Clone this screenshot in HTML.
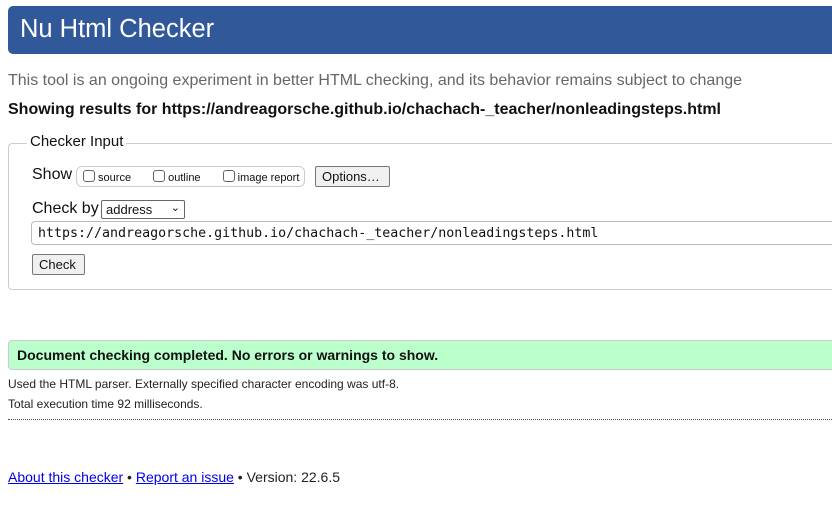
<!DOCTYPE html>
<html><head><meta charset="utf-8"><style>
*{box-sizing:border-box}
body{margin:0;width:832px;height:528px;background:#fff;font-family:"Liberation Sans",Arial,sans-serif;color:#111;position:relative;overflow:hidden}
.a{position:absolute;white-space:nowrap}
.hdr{left:8px;top:6px;width:830px;height:48px;background:#31599a;border-radius:5px 0 0 5px;color:#fff;font-size:25.5px;padding:9px 0 0 12px}
.fs{left:8px;top:143px;width:830px;height:147px;border:1px solid #ccc;border-right:none;border-radius:4px 0 0 4px}
.btn{border:1px solid #777;border-radius:2px;background:#f0f0f0;font-size:13px;padding:2px 6px}
.cb{display:inline-block;width:12px;height:12px;border:1px solid #666;border-radius:3px;vertical-align:-1px;background:#fff}
a{color:#00e;text-decoration:underline}
</style></head><body>
<div class="a hdr">Nu Html Checker</div>
<div class="a" style="left:8px;top:72px;font-size:16px;color:#666">This tool is an ongoing experiment in better HTML checking, and its behavior remains subject to change</div>
<div class="a" style="left:8px;top:101px;font-size:16px;font-weight:bold">Showing results for https://andreagorsche.github.io/chachach-_teacher/nonleadingsteps.html</div>
<div class="a fs"></div>
<div class="a" style="left:27px;top:133px;font-size:15px;background:#fff;padding:0 3px">Checker Input</div>
<div class="a" style="left:32px;top:166px;font-size:16px">Show</div>
<div class="a" style="left:76px;top:166px;width:229px;height:21px;border:1px solid #ccc;border-radius:6px;font-size:11px;padding:3px 0 0 6px"><span class="cb"></span> source<span style="display:inline-block;width:22px"></span><span class="cb"></span> outline<span style="display:inline-block;width:22px"></span><span class="cb"></span> image report</div>
<div class="a btn" style="left:315px;top:166px;height:21px;width:75px;font-size:13px">Options…</div>
<div class="a" style="left:32px;top:200px;font-size:16px">Check by</div>
<div class="a" style="left:101px;top:200px;width:84px;height:19px;border:1px solid #666;border-radius:2px;font-size:13px;padding:1px 0 0 4px">address <span style="position:absolute;right:4px;top:0;font-size:11px">&#8964;</span></div>
<div class="a" style="left:31px;top:221px;width:805px;height:24px;border:1px solid #bbb;border-radius:4px;font-family:'DejaVu Sans Mono','Liberation Mono',monospace;font-size:13.3px;padding:4px 0 0 6px">https://andreagorsche.github.io/chachach-_teacher/nonleadingsteps.html</div>
<div class="a btn" style="left:32px;top:254px;width:53px;height:21px;font-size:13px">Check</div>
<div class="a" style="left:8px;top:340px;width:830px;height:30px;background:#bbffcc;border:1px solid #ccc;border-right:none;border-radius:4px 0 0 4px;font-size:14px;font-weight:bold;padding:6px 0 0 8px">Document checking completed. No errors or warnings to show.</div>
<div class="a" style="left:8px;top:377px;font-size:12px;color:#222">Used the HTML parser. Externally specified character encoding was utf-8.</div>
<div class="a" style="left:8px;top:397px;font-size:12px;color:#222">Total execution time 92 milliseconds.</div>
<div class="a" style="left:8px;top:419px;width:830px;border-top:1px dotted #555"></div>
<div class="a" style="left:8px;top:469px;font-size:14px;color:#222"><a>About this checker</a> • <a>Report an issue</a> • Version: 22.6.5</div>
</body></html>
